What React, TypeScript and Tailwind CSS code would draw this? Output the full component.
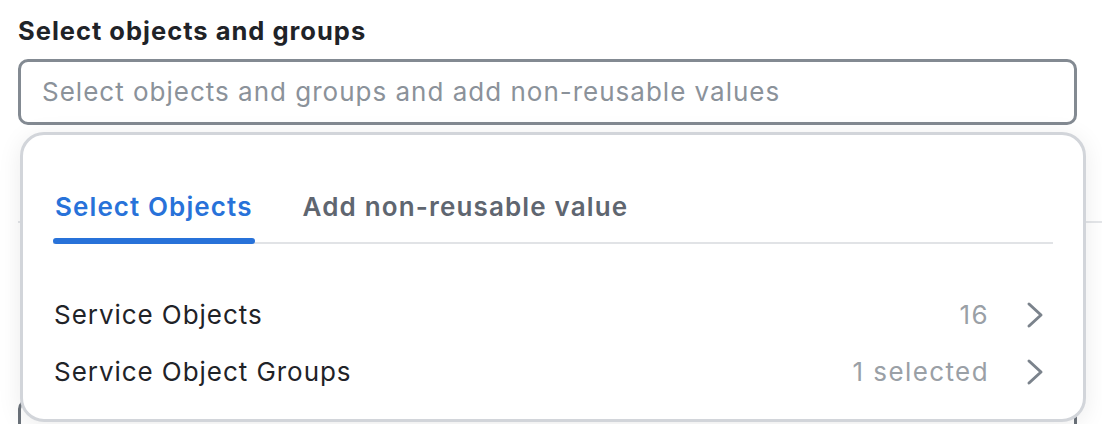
const rows = [
  { name: "Service Objects", meta: "16" },
  { name: "Service Object Groups", meta: "1 selected" },
];

function Chevron() {
  return (
    <svg width="20" height="28" viewBox="0 0 20 28" fill="none" className="ml-[36px] mr-[8px]">
      <path d="M4 3 L16 14 L4 25" stroke="#7b838c" strokeWidth="3" strokeLinecap="round" strokeLinejoin="round" />
    </svg>
  );
}

export default function App() {
  return (
    <div className="relative h-[424px] w-full overflow-hidden bg-white font-['Inter',sans-serif] text-[#1f2328]">
      <div className="flex flex-col px-[18px] pt-[15px]">
        <label className="text-[25.5px] font-bold leading-[32px] tracking-[1px]">Select objects and groups</label>
        <div className="mt-[12px] flex h-[66px] w-[1059px] items-center rounded-[10px] border-[3px] border-[#838a92] px-[21px]">
          <span className="text-[26px] leading-none tracking-[1px] text-[#8b929a]">
            Select objects and groups and add non-reusable values
          </span>
        </div>
        {/* form content hidden behind the dropdown */}
        <div className="mt-[96px] h-[2px] w-[1102px] bg-[#e4e6e9]" />
        <div className="mt-[176px] h-[60px] w-[1059px] rounded-[10px] border-[3px] border-[#6b727a]" />
      </div>

      <div className="absolute left-[20px] top-[132px] h-[290px] w-[1066px] rounded-[24px] border-[3px] border-[#d2d5da] bg-white px-[30px] shadow-[0_4px_24px_rgba(0,0,0,0.08)]">
        <div className="mt-[56px] flex border-b-2 border-[#e1e3e6]">
          <div className="relative -mb-[2px] px-[2px] pb-[19px]">
            <span className="text-[26px] font-semibold leading-[32px] tracking-[1.1px] text-[#2872d9]">Select Objects</span>
            <div className="absolute bottom-0 left-0 right-0 h-[6px] rounded-full bg-[#2872d9]" />
          </div>
          <div className="ml-[48px] pb-[19px]">
            <span className="text-[26px] font-semibold leading-[32px] tracking-[1.15px] text-[#5f6670]">Add non-reusable value</span>
          </div>
        </div>
        <div className="mt-[42px] flex flex-col">
          {rows.map((r) => (
            <div key={r.name} className="flex h-[57px] items-center">
              <span className="flex-1 pl-[1px] text-[26px] leading-none tracking-[0.95px]">{r.name}</span>
              <span className="text-[26px] leading-none tracking-[1.4px] text-[#9aa0a6]">{r.meta}</span>
              <Chevron />
            </div>
          ))}
        </div>
      </div>
    </div>
  );
}
